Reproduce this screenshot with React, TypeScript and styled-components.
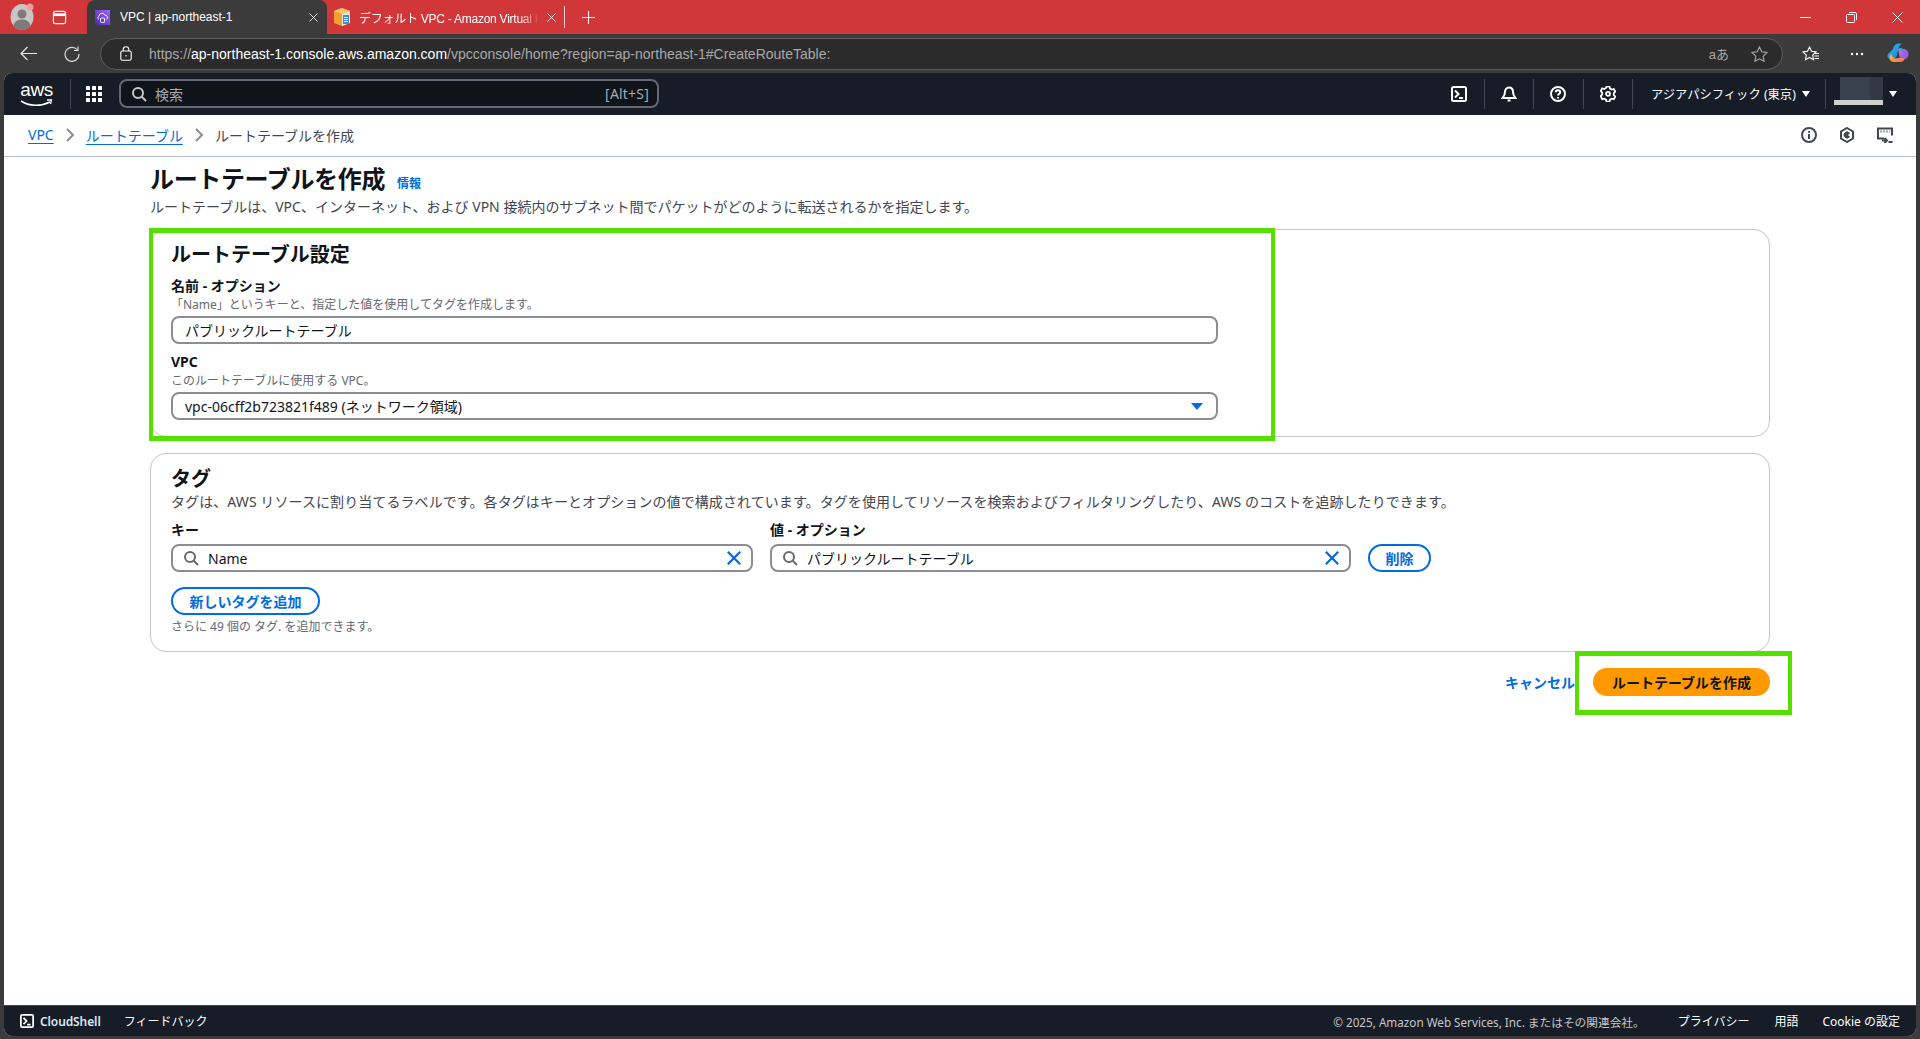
import React from "react";
import styled, { createGlobalStyle } from "styled-components";

const Global = createGlobalStyle`
  html, body { margin: 0; height: 100%; overflow: hidden; background: #3b3b3b; }
  #root { height: 100%; }
  * { box-sizing: border-box; }
  body { font-family: "Open Sans", "Noto Sans CJK JP", sans-serif; }
`;

const FONT = `"Noto Sans", "Noto Sans CJK JP", sans-serif`;
const UI = `"Liberation Sans", "Noto Sans CJK JP", sans-serif`;

const Shell = styled.div`
  height: 1039px;
  display: flex;
  flex-direction: column;
  background: #3b3b3b;
`;

/* ---------- browser chrome ---------- */
const TabStrip = styled.div`
  height: 34px;
  flex: none;
  background: #d13639;
  display: flex;
  align-items: stretch;
  font-family: ${UI};
  color: #fff;
  font-size: 12px;
`;
const StripLead = styled.div`
  width: 87px;
  flex: none;
  display: flex;
  align-items: center;
  padding-left: 10px;
  gap: 18px;
`;
const ActiveTab = styled.div`
  width: 240px;
  flex: none;
  background: #3b3b3b;
  border-radius: 8px 8px 0 0;
  display: flex;
  align-items: center;
  padding: 0 9px 0 8px;
  gap: 10px;
`;
const InactiveTab = styled.div`
  width: 238px;
  flex: none;
  display: flex;
  align-items: center;
  padding: 0 8px 0 6px;
  gap: 8px;
  border-right: 1px solid #ffffffc0;
  margin: 6px 0;
`;
const TabTitle = styled.span<{ $fade?: boolean }>`
  flex: 1;
  white-space: nowrap;
  overflow: hidden;
  ${(p) =>
    p.$fade &&
    `letter-spacing: -.25px; -webkit-mask-image: linear-gradient(90deg,#000 90%,transparent); mask-image: linear-gradient(90deg,#000 90%,transparent);`}
`;
const NewTab = styled.div`
  width: 46px;
  display: flex;
  align-items: center;
  justify-content: center;
`;
const Spacer = styled.div`
  flex: 1;
`;
const WindowButtons = styled.div`
  display: flex;
  align-items: center;
`;
const WindowButton = styled.div`
  width: 46px;
  height: 34px;
  display: flex;
  align-items: center;
  justify-content: center;
`;

const Toolbar = styled.div`
  height: 39px;
  flex: none;
  display: flex;
  align-items: center;
  padding: 0 0 0 8px;
  color: #fff;
`;
const ToolButton = styled.div<{ $w?: number }>`
  width: ${(p) => p.$w ?? 44}px;
  flex: none;
  display: flex;
  align-items: center;
  justify-content: center;
`;
const Omnibox = styled.div`
  width: 1683px;
  height: 32px;
  margin-left: 4px;
  flex: none;
  border: 1px solid #5e5e5e;
  border-radius: 16px;
  background: #2b2b2b;
  display: flex;
  align-items: center;
  padding: 0 14px 0 19px;
  font-family: ${UI};
  font-size: 14px;
  color: #a8a8a8;
`;
const Url = styled.span`
  margin-left: 17px;
  flex: 1;
  white-space: nowrap;
  b {
    font-weight: 400;
    color: #fff;
  }
`;
const ReadAloud = styled.span`
  color: #a8a8a8;
  font-size: 13px;
  margin-right: 22px;
`;

/* ---------- console ---------- */
const Console = styled.div`
  flex: 1;
  margin: 0 4px 3px 4px;
  display: flex;
  flex-direction: column;
  background: #fff;
  border-radius: 8px;
  overflow: hidden;
  font-family: ${FONT};
  color: #0f141a;
`;
const TopNav = styled.header`
  height: 42px;
  flex: none;
  background: #161d26;
  display: flex;
  align-items: center;
  color: #fff;
  padding-left: 16px;
`;
const AwsLogo = styled.div`
  width: 33px;
  height: 28px;
  position: relative;
  flex: none;
  font-family: ${UI};
  font-size: 19px;
  line-height: 20px;
  text-align: center;
  letter-spacing: -0.5px;
  svg {
    position: absolute;
    left: 0;
    bottom: 0;
  }
`;
const NavDivider = styled.div`
  width: 1px;
  height: 30px;
  background: #424650;
  flex: none;
  margin-left: 17px;
`;
const GridButton = styled.div`
  width: 48px;
  flex: none;
  display: flex;
  justify-content: center;
  padding-right: 2px;
`;
const SearchBox = styled.div`
  width: 540px;
  height: 29px;
  flex: none;
  margin-top: -1px;
  border: 2px solid #656871;
  border-radius: 8px;
  background: #0f141a;
  display: flex;
  align-items: center;
  padding: 0 8px 0 10px;
  gap: 8px;
  font-size: 14px;
  color: #a4abb5;
`;
const SearchHint = styled.span`
  margin-left: auto;
  letter-spacing: 0.2px;
`;
const NavIcon = styled.div`
  width: 49.5px;
  height: 30px;
  flex: none;
  border-right: 1px solid #424650;
  display: flex;
  align-items: center;
  justify-content: center;
`;
const RegionMenu = styled.div`
  height: 30px;
  width: 193px;
  flex: none;
  border-right: 1px solid #424650;
  display: flex;
  align-items: center;
  padding-left: 18px;
  gap: 6px;
  font-size: 12.3px;
  white-space: nowrap;
`;
const Account = styled.div`
  width: 90px;
  height: 42px;
  flex: none;
  display: flex;
  align-items: center;
  padding-left: 8px;
`;
const Redacted = styled.div`
  width: 49px;
  height: 28px;
  flex: none;
  align-self: flex-end;
  margin-bottom: 10px;
  display: flex;
  flex-direction: column;
  align-items: flex-end;
`;
const RedactedBlock = styled.div`
  width: 43px;
  height: 23px;
  background: linear-gradient(90deg, #3a424e 0 30px, #323943 30px);
`;
const RedactedBar = styled.div`
  width: 49px;
  height: 5px;
  background: #cfcfcf;
`;
const Caret = styled.span<{ $color?: string; $size?: number }>`
  width: 0;
  height: 0;
  flex: none;
  border-left: ${(p) => p.$size ?? 4.5}px solid transparent;
  border-right: ${(p) => p.$size ?? 4.5}px solid transparent;
  border-top: ${(p) => (p.$size ?? 4.5) + 1.5}px solid ${(p) => p.$color ?? "#fff"};
`;
const AccountCaret = styled(Caret)`
  margin-left: 6px;
`;

const Crumbs = styled.nav`
  height: 42px;
  flex: none;
  border-bottom: 1px solid #b6bec9;
  display: flex;
  align-items: center;
  padding: 0 23px 2px 24px;
  font-size: 14px;
  color: #424650;
`;
const CrumbLink = styled.a`
  color: #006ce0;
  text-decoration: underline;
  text-underline-offset: 3px;
`;
const CrumbChevron = styled.span`
  width: 32px;
  display: flex;
  justify-content: center;
`;
const CrumbIcons = styled.div`
  margin-left: auto;
  display: flex;
  gap: 22px;
`;

const Content = styled.main`
  flex: 1;
  padding: 7px 146px 0;
  min-height: 0;
`;
const HeadRow = styled.div`
  display: flex;
  align-items: center;
  gap: 12px;
  height: 30px;
`;
const H1 = styled.h1`
  margin: 0;
  font-size: 24px;
  line-height: 30px;
  font-weight: 700;
  letter-spacing: -0.35px;
`;
const InfoLink = styled.a`
  font-size: 12px;
  font-weight: 700;
  color: #006ce0;
  margin-top: 8px;
`;
const PageDesc = styled.p`
  margin: 0 0 9px;
  font-size: 14px;
  line-height: 26px;
  color: #424650;
`;
const Card = styled.section<{ $h: number }>`
  position: relative;
  height: ${(p) => p.$h}px;
  border: 1px solid #c6c6cd;
  border-radius: 16px;
  padding: 12px 20px 0;
  & + & {
    margin-top: 16px;
  }
`;
const Highlight = styled.div<{ $l: number; $t: number; $w: number; $h: number }>`
  position: absolute;
  left: ${(p) => p.$l}px;
  top: ${(p) => p.$t}px;
  width: ${(p) => p.$w}px;
  height: ${(p) => p.$h}px;
  border: 4px solid #55e000;
  border-width: 5px 4px;
  pointer-events: none;
`;
const H2 = styled.h2`
  margin: 0;
  font-size: 20px;
  line-height: 26px;
  font-weight: 700;
`;
const Label = styled.div`
  font-size: 14px;
  line-height: 18px;
  font-weight: 700;
`;
const Hint = styled.div`
  font-size: 12px;
  line-height: 16px;
  color: #656871;
`;
const FieldHint = styled(Hint)`
  margin-top: 2px;
`;
const Field = styled.div`
  width: 1047px;
  margin-top: 9px;
  & + & {
    margin-top: 9px;
  }
`;
const Input = styled.div`
  height: 28px;
  margin-top: 3px;
  border: 2px solid #8c8c94;
  border-radius: 8px;
  display: flex;
  align-items: center;
  padding: 0 13px 0 12px;
  font-size: 14px;
  justify-content: space-between;
`;
const TagDesc = styled.p`
  margin: -1px 0 0;
  font-size: 14px;
  line-height: 22px;
  color: #424650;
  letter-spacing: 0.08px;
`;
const TagRow = styled.div`
  display: grid;
  grid-template-columns: 582px 581px 63px;
  column-gap: 17px;
  margin-top: 7px;
`;
const TagCell = styled.div`
  display: flex;
  flex-direction: column;
`;
const TagLabel = styled(Label)`
  margin-bottom: 5px;
  line-height: 19px;
`;
const TagInput = styled(Input)`
  margin-top: 0;
  padding: 0 8px 0 10px;
  justify-content: flex-start;
  gap: 9px;
`;
const Clear = styled.span`
  margin-left: auto;
  display: flex;
`;
const PillButton = styled.button`
  height: 28px;
  border: 2px solid #006ce0;
  border-radius: 20px;
  background: #fff;
  color: #006ce0;
  font: 700 14px ${FONT};
  padding: 0;
  cursor: pointer;
  white-space: nowrap;
`;
const DeleteButton = styled(PillButton)`
  align-self: end;
  width: 63px;
`;
const AddButton = styled(PillButton)`
  display: block;
  margin-top: 15px;
  width: 149px;
`;
const AddHint = styled(Hint)`
  margin-top: 4px;
`;
const Actions = styled.div`
  display: flex;
  justify-content: flex-end;
  align-items: center;
  margin-top: 16px;
`;
const CancelLink = styled.a`
  color: #006ce0;
  font-size: 14px;
  font-weight: 700;
  margin-right: 18px;
`;
const SubmitWrap = styled.div`
  position: relative;
`;
const SubmitButton = styled.button`
  display: block;
  width: 177px;
  height: 28px;
  border: none;
  border-radius: 20px;
  background: #ff9900;
  color: #0f141a;
  font: 700 14px ${FONT};
  padding: 0;
  cursor: pointer;
`;

const Footer = styled.footer`
  height: 31px;
  flex: none;
  background: #161d26;
  border-top: 1px solid #424650;
  display: flex;
  align-items: center;
  padding: 0 16px 0 16px;
  font-size: 12px;
  color: #fff;
`;
const CloudShell = styled.span`
  display: flex;
  align-items: center;
  gap: 6px;
  font-weight: 600;
  color: #dbe6f5;
  letter-spacing: -0.1px;
`;
const FooterLink = styled.span<{ $gap: number }>`
  margin-left: ${(p) => p.$gap}px;
  white-space: nowrap;
`;
const Copyright = styled.span`
  margin-left: auto;
  color: #c6c6cd;
  font-size: 11.7px;
  white-space: nowrap;
`;

/* ---------- drawings ---------- */
const Svg = (p: React.SVGProps<SVGSVGElement> & { s?: number }) => {
  const { s = 16, ...rest } = p;
  return <svg width={s} height={s} viewBox="0 0 16 16" fill="none" stroke="currentColor" strokeWidth={2} {...rest} />;
};
const Search = ({ c = "#656871", s = 16 }: { c?: string; s?: number }) => (
  <Svg s={s} stroke={c}>
    <circle cx="7" cy="7" r="5" />
    <path d="M10.5 10.5 15 15" />
  </Svg>
);
const ClearX = () => (
  <svg width="18" height="18" viewBox="0 0 16 16" fill="none" stroke="#006ce0" strokeWidth="2">
    <path d="M2.5 2.5l11 11M13.5 2.5l-11 11" />
  </svg>
);
const Chevron = () => (
  <Svg stroke="#8c8c94">
    <path d="M5 2l6 6-6 6" />
  </Svg>
);
const Terminal = ({ s = 16, c = "#fff" }: { s?: number; c?: string }) => (
  <Svg s={s} stroke={c}>
    <rect x="1" y="1" width="14" height="14" rx="1.5" />
    <path d="M4 4.5 7.5 8 4 11.5M8 12h4" />
  </Svg>
);
const Bell = () => (
  <Svg>
    <path d="M8 1.5c-2.6 0-4 2-4 4.5 0 3-1.300 4.500-2.500 6h13c-1.200-1.500-2.500-3-2.500-6 0-2.500-1.400-4.500-4-4.500z" />
    <path d="M6.500 14.500h3" />
  </Svg>
);
const Help = () => (
  <Svg>
    <circle cx="8" cy="8" r="7" />
    <path d="M5.800 6.200C5.800 5 6.800 4.200 8 4.200s2.200.8 2.200 2c0 1.700-2.200 1.700-2.200 3.300M8 11v1.500" />
  </Svg>
);
const Gear = () => (
  <Svg strokeWidth={1.8}>
    <path d="M6.500 1h3l.5 2 1.800 1 2-.6 1.500 2.600-1.500 1.500v2l1.500 1.500-1.500 2.600-2-.6-1.800 1-.5 2h-3l-.5-2-1.800-1-2 .6L.7 10.400l1.500-1.500v-2L.7 5.400l1.500-2.600 2 .6L6 2.400z" transform="translate(0 -.4)" />
    <circle cx="8" cy="7.800" r="2" />
  </Svg>
);
const Info = () => (
  <Svg stroke="#424650">
    <circle cx="8" cy="8" r="7" />
    <path d="M8 7v5M8 4v1.800" />
  </Svg>
);
const Hexagon = () => (
  <Svg stroke="#424650">
    <path d="M8 1l6 3.500v7L8 15l-6-3.500v-7z" />
    <path d="M10.500 6.200A3 3 0 1 0 10.500 9.800L8 8z" fill="#424650" strokeWidth="1" />
  </Svg>
);
const FeedbackScreen = () => (
  <Svg stroke="#424650">
    <path d="M7 11.500H1V1.500h14v7" />
    <path d="M3.500 4.500h1M6.500 4.500h1M9.500 4.500h1M12.500 4.500h.5" />
    <path d="M5 13.500h4M7.500 11l2.500 2.500L7.500 16M11.500 15h4" />
  </Svg>
);
const Grid = () => (
  <svg width="16" height="16" viewBox="0 0 16 16" fill="#fff">
    {[0, 6, 12].flatMap((y) =>
      [0, 6, 12].map((x) => <rect key={`${x}-${y}`} x={x} y={y} width="4" height="4" rx=".5" />)
    )}
  </svg>
);
const VpcIcon = () => (
  <svg width="15" height="15" viewBox="0 0 15 15">
    <defs>
      <linearGradient id="vpcg" x1="0" y1="1" x2="1" y2="0">
        <stop offset="0" stopColor="#4d27a8" />
        <stop offset="1" stopColor="#a166ff" />
      </linearGradient>
    </defs>
    <rect width="15" height="15" fill="url(#vpcg)" />
    <path d="M4 9.500a2 2 0 0 1 0-3.500 3 3 0 0 1 5.800-.8 2.300 2.300 0 0 1 1.400 4.300" fill="none" stroke="#fff" strokeWidth=".9" />
    <rect x="5.500" y="8" width="4" height="4.500" rx=".8" fill="none" stroke="#fff" strokeWidth=".9" />
  </svg>
);
const BoxIcon = () => (
  <svg width="18" height="20" viewBox="0 0 18 20">
    <path d="M1 4l8-3 8 3v12l-8 3-8-3z" fill="#f0a030" />
    <path d="M1 4l8-3 8 3-8 3z" fill="#f8c66a" />
    <path d="M9 7l8-3v12l-8 3z" fill="#e9e4d6" />
    <rect x="10" y="8" width="6" height="9" fill="#3a8ee0" />
    <path d="M11 10.500h4M11 12.500h4M11 14.500h4" stroke="#fff" strokeWidth=".8" />
  </svg>
);
const Avatar = () => (
  <svg width="24" height="28" viewBox="0 0 24 28">
    <ellipse cx="12" cy="14" rx="11.500" ry="13" fill="#c9c5c4" />
    <circle cx="12" cy="11" r="4.500" fill="#7d7a79" />
    <path d="M3.500 23c1-5 4.500-6.500 8.500-6.500s7.500 1.500 8.500 6.500c-2 2.500-5 4-8.500 4s-6.500-1.500-8.500-4z" fill="#7d7a79" />
    <circle cx="20" cy="4" r="3.500" fill="#ee9d9d" />
  </svg>
);
const VerticalTabs = () => (
  <Svg stroke="#fff" strokeWidth={1.2} s={15}>
    <rect x="1.500" y="1.500" width="13" height="13" rx="2" />
    <path d="M1.500 5h13" strokeWidth="3" />
  </Svg>
);
const ThinX = ({ s = 11 }: { s?: number }) => (
  <svg width={s} height={s} viewBox="0 0 11 11" stroke="#fff" strokeWidth="1">
    <path d="M.5.5l10 10M10.500.5l-10 10" />
  </svg>
);
const Plus = () => (
  <svg width="13" height="13" viewBox="0 0 13 13" stroke="#fff" strokeWidth="1.100">
    <path d="M6.500 0v13M0 6.500h13" />
  </svg>
);
const Back = () => (
  <svg width="17" height="15" viewBox="0 0 17 15" fill="none" stroke="#e6e6e6" strokeWidth="1.200">
    <path d="M17 7.500H1M7.500 1 1 7.500 7.500 14" />
  </svg>
);
const Reload = () => (
  <svg width="16" height="16" viewBox="0 0 16 16" fill="none" stroke="#d8d8d8" strokeWidth="1.200">
    <path d="M13.500 4A7 7 0 1 0 15 8" />
    <path d="M14 .5V4.500h-4" />
  </svg>
);
const Lock = () => (
  <svg width="12" height="15" viewBox="0 0 12 15" fill="none" stroke="#fff" strokeWidth="1.100">
    <rect x=".8" y="5" width="10.400" height="9.300" rx="1.500" />
    <path d="M3.200 5V3.500a2.800 2.800 0 0 1 5.600 0V5M6 9v1.500" />
  </svg>
);
const Star = ({ c = "#a8a8a8" }: { c?: string }) => (
  <svg width="17" height="16" viewBox="0 0 17 16" fill="none" stroke={c} strokeWidth="1.100">
    <path d="M8.500 1l2.300 4.800 5.200.7-3.800 3.600.9 5.200-4.600-2.500-4.600 2.500.9-5.200L1 6.500l5.200-.7z" />
  </svg>
);
const Favorites = () => (
  <svg width="18" height="16" viewBox="0 0 18 16" fill="none" stroke="#fff" strokeWidth="1.100">
    <path d="M7.500 1l2 4.300 4.500.6-3.300 3.200.8 4.600-4-2.200-4 2.200.8-4.600L1 5.900l4.500-.6zM12.500 7.500H17M12.500 10H17M12.500 12.500H17" />
  </svg>
);
const Dots = () => (
  <svg width="14" height="4" viewBox="0 0 14 4" fill="#fff">
    <circle cx="2" cy="2" r="1.200" />
    <circle cx="7" cy="2" r="1.200" />
    <circle cx="12" cy="2" r="1.200" />
  </svg>
);
const Copilot = () => (
  <svg width="22" height="21" viewBox="0 0 22 21">
    <defs>
      <linearGradient id="cpa" x1="0" y1="0" x2="1" y2="1">
        <stop offset="0" stopColor="#1fc8e8" />
        <stop offset="1" stopColor="#2a6fe0" />
      </linearGradient>
      <linearGradient id="cpb" x1="0" y1="0" x2="1" y2="1">
        <stop offset="0" stopColor="#d66be0" />
        <stop offset="1" stopColor="#7a56e8" />
      </linearGradient>
      <linearGradient id="cpc" x1="0" y1="0" x2="1" y2="1">
        <stop offset="0" stopColor="#f2c230" />
        <stop offset="1" stopColor="#f06a6a" />
      </linearGradient>
    </defs>
    <path d="M6 6c1-4 3-5.500 6-5.500h3c-2 1-3 3-4 7l-1 5c-.5 2-2 3-4 3H2.500C.5 15.500 0 13 1 11z" fill="url(#cpa)" />
    <path d="M11 6h5c3.500 0 5.500 2.500 5.500 5 0 3.500-1.500 5-4 5H13z" fill="url(#cpb)" />
    <path d="M4 11c-2 3-2 6 0 7 1 .8 2 1 3 1h6c3 0 4-1.500 5-4h-6c-2 0-4 1-5 0-1.500-1-2-2.500-3-4z" fill="url(#cpc)" />
    <path d="M12 5l1.500 0c2 0 3 1.500 3.500 3l1 3c-2-3-5-3-6-6z" fill="url(#cpa)" />
  </svg>
);

export default function App() {
  return (
    <Shell>
      <Global />
      <TabStrip>
        <StripLead>
          <Avatar />
          <VerticalTabs />
        </StripLead>
        <ActiveTab>
          <VpcIcon />
          <TabTitle>VPC | ap-northeast-1</TabTitle>
          <ThinX s={9} />
        </ActiveTab>
        <InactiveTab>
          <BoxIcon />
          <TabTitle $fade>デフォルト VPC - Amazon Virtual Pri</TabTitle>
          <ThinX s={9} />
        </InactiveTab>
        <NewTab>
          <Plus />
        </NewTab>
        <Spacer />
        <WindowButtons>
          <WindowButton>
            <svg width="11" height="1"><rect width="11" height="1" fill="#fff" /></svg>
          </WindowButton>
          <WindowButton>
            <svg width="11" height="11" viewBox="0 0 11 11" fill="none" stroke="#fff">
              <rect x=".5" y="2.500" width="8" height="8" rx="1" />
              <path d="M3 .5h6a1.500 1.500 0 0 1 1.500 1.500v6" />
            </svg>
          </WindowButton>
          <WindowButton>
            <ThinX />
          </WindowButton>
        </WindowButtons>
      </TabStrip>

      <Toolbar>
        <ToolButton $w={40}>
          <Back />
        </ToolButton>
        <ToolButton $w={48}>
          <Reload />
        </ToolButton>
        <Omnibox>
          <Lock />
          <Url>
            https://<b>ap-northeast-1.console.aws.amazon.com</b>/vpcconsole/home?region=ap-northeast-1#CreateRouteTable:
          </Url>
          <ReadAloud>aあ</ReadAloud>
          <Star />
        </Omnibox>
        <ToolButton $w={56}>
          <Favorites />
        </ToolButton>
        <ToolButton $w={36}>
          <Dots />
        </ToolButton>
        <ToolButton $w={46}>
          <Copilot />
        </ToolButton>
      </Toolbar>

      <Console>
        <TopNav>
          <AwsLogo>
            aws
            <svg width="33" height="9" viewBox="0 0 33 9" fill="none">
              <path d="M1 2c8 5.500 20 5.500 29 1" stroke="#fff" strokeWidth="1.600" />
              <path d="M27 1h4.500l-1 4" stroke="#fff" strokeWidth="1.300" />
            </svg>
          </AwsLogo>
          <NavDivider />
          <GridButton>
            <Grid />
          </GridButton>
          <SearchBox>
            <Search c="#c6c6cd" />
            検索
            <SearchHint>[Alt+S]</SearchHint>
          </SearchBox>
          <Spacer />
          <NavIcon>
            <Terminal />
          </NavIcon>
          <NavIcon>
            <Bell />
          </NavIcon>
          <NavIcon>
            <Help />
          </NavIcon>
          <NavIcon>
            <Gear />
          </NavIcon>
          <RegionMenu>
            アジアパシフィック (東京)
            <Caret />
          </RegionMenu>
          <Account>
            <Redacted>
              <RedactedBlock />
              <RedactedBar />
            </Redacted>
            <AccountCaret />
          </Account>
        </TopNav>

        <Crumbs>
          <CrumbLink>VPC</CrumbLink>
          <CrumbChevron>
            <Chevron />
          </CrumbChevron>
          <CrumbLink>ルートテーブル</CrumbLink>
          <CrumbChevron>
            <Chevron />
          </CrumbChevron>
          ルートテーブルを作成
          <CrumbIcons>
            <Info />
            <Hexagon />
            <FeedbackScreen />
          </CrumbIcons>
        </Crumbs>

        <Content>
          <HeadRow>
            <H1>ルートテーブルを作成</H1>
            <InfoLink>情報</InfoLink>
          </HeadRow>
          <PageDesc>
            ルートテーブルは、VPC、インターネット、および VPN 接続内のサブネット間でパケットがどのように転送されるかを指定します。
          </PageDesc>

          <Card $h={208}>
            <H2>ルートテーブル設定</H2>
            <Field>
              <Label>名前 - オプション</Label>
              <FieldHint>「Name」というキーと、指定した値を使用してタグを作成します。</FieldHint>
              <Input>パブリックルートテーブル</Input>
            </Field>
            <Field>
              <Label>VPC</Label>
              <FieldHint>このルートテーブルに使用する VPC。</FieldHint>
              <Input>
                vpc-06cff2b723821f489 (ネットワーク領域)
                <Caret $color="#006ce0" $size={6} />
              </Input>
            </Field>
            <Highlight $l={-2} $t={-2} $w={1126} $h={213} />
          </Card>

          <Card $h={199}>
            <H2>タグ</H2>
            <TagDesc>
              タグは、AWS リソースに割り当てるラベルです。各タグはキーとオプションの値で構成されています。タグを使用してリソースを検索およびフィルタリングしたり、AWS のコストを追跡したりできます。
            </TagDesc>
            <TagRow>
              <TagCell>
                <TagLabel>キー</TagLabel>
                <TagInput>
                  <Search />
                  Name
                  <Clear>
                    <ClearX />
                  </Clear>
                </TagInput>
              </TagCell>
              <TagCell>
                <TagLabel>値 - オプション</TagLabel>
                <TagInput>
                  <Search />
                  パブリックルートテーブル
                  <Clear>
                    <ClearX />
                  </Clear>
                </TagInput>
              </TagCell>
              <DeleteButton>削除</DeleteButton>
            </TagRow>
            <AddButton>新しいタグを追加</AddButton>
            <AddHint>さらに 49 個の タグ. を追加できます。</AddHint>
          </Card>

          <Actions>
            <CancelLink>キャンセル</CancelLink>
            <SubmitWrap>
              <SubmitButton>ルートテーブルを作成</SubmitButton>
              <Highlight $l={-18} $t={-17} $w={217} $h={64} />
            </SubmitWrap>
          </Actions>
        </Content>

        <Footer>
          <CloudShell>
            <Terminal s={14} />
            CloudShell
          </CloudShell>
          <FooterLink $gap={23}>フィードバック</FooterLink>
          <Copyright>© 2025, Amazon Web Services, Inc. またはその関連会社。</Copyright>
          <FooterLink $gap={33}>プライバシー</FooterLink>
          <FooterLink $gap={25}>用語</FooterLink>
          <FooterLink $gap={24}>Cookie の設定</FooterLink>
        </Footer>
      </Console>
    </Shell>
  );
}
